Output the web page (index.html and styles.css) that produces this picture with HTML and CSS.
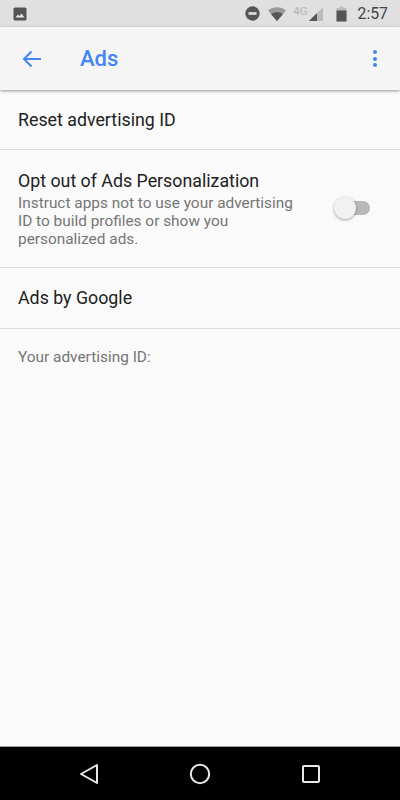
FILE: index.html
```html
<!DOCTYPE html>
<html lang="en">

<head>
    <meta charset="UTF-8">
    <meta name="viewport" content="width=device-width, initial-scale=1.0">
    <title>Ads</title>
    <link rel="stylesheet" href="styles.css">
</head>

<body>
    <!-- Status bar -->
    <div class="status-bar">
        <svg class="photo-icon" width="14" height="14" viewBox="0 0 14 14">
            <rect x="0.5" y="0.5" width="13" height="13" rx="1.5" fill="#555"/>
            <path d="M2.5 10.5 L5 7.5 L6.5 9 L8.5 6.5 L11.5 10.5 Z" fill="#e6e6e6"/>
        </svg>
        <div class="status-right">
            <svg class="dnd-icon" width="15" height="15" viewBox="0 0 15 15">
                <circle cx="7.5" cy="7.5" r="7.2" fill="#555"/>
                <rect x="3.5" y="6.2" width="8" height="2.6" fill="#e0e0e0"/>
            </svg>
            <svg class="wifi-icon" width="18" height="14" viewBox="0 0 18 14">
                <path d="M0 3.5 C5 -0.8 13 -0.8 18 3.5 L9 14 Z" fill="#9a9a9a"/>
                <path d="M3.2 7.2 C6.5 4.6 11.5 4.6 14.8 7.2 L9 14 Z" fill="#555"/>
            </svg>
            <span class="net-label">4G</span>
            <svg class="signal-icon" width="14" height="14" viewBox="0 0 14 14">
                <path d="M14 0 L14 14 L0 14 Z" fill="#bbb"/>
                <path d="M8 6 L8 14 L0 14 Z" fill="#555"/>
            </svg>
            <svg class="battery-icon" width="11" height="16" viewBox="0 0 11 16">
                <path d="M3.5 0.5 H7.5 V2 H10.5 V15.5 H0.5 V2 H3.5 Z" fill="#bdbdbd"/>
                <rect x="0.5" y="4.5" width="10" height="11" fill="#555"/>
            </svg>
            <span class="clock">2:57</span>
        </div>
    </div>

    <!-- Toolbar -->
    <div class="toolbar">
        <svg class="back-arrow" width="20" height="18" viewBox="0 0 20 18">
            <path d="M19 9 H2 M9.5 1.5 L2 9 L9.5 16.5" fill="none" stroke="#4285f4" stroke-width="2"/>
        </svg>
        <h1 class="toolbar-title">Ads</h1>
        <div class="overflow-menu">
            <span></span><span></span><span></span>
        </div>
    </div>

    <!-- Settings list -->
    <div class="content">
        <div class="row row-single">Reset advertising ID</div>
        <div class="row row-toggle">
            <div class="row-text">
                <div class="row-title">Opt out of Ads Personalization</div>
                <div class="row-summary">Instruct apps not to use your advertising ID to build profiles or show you personalized ads.</div>
            </div>
            <div class="switch">
                <div class="switch-thumb"></div>
            </div>
        </div>
        <div class="row row-single row-google">Ads by Google</div>
        <div class="ad-id">Your advertising ID:</div>
    </div>

    <!-- Navigation bar -->
    <div class="nav-bar">
        <svg width="20" height="22" viewBox="0 0 20 22">
            <path d="M18 2 V20 L2 11 Z" fill="none" stroke="#e8e8e8" stroke-width="2" stroke-linejoin="round"/>
        </svg>
        <svg width="22" height="22" viewBox="0 0 22 22">
            <circle cx="11" cy="11" r="9.2" fill="none" stroke="#e8e8e8" stroke-width="2"/>
        </svg>
        <svg width="20" height="20" viewBox="0 0 20 20">
            <rect x="2" y="2" width="16" height="16" rx="1" fill="none" stroke="#e8e8e8" stroke-width="2"/>
        </svg>
    </div>
</body>

</html>
```

FILE: styles.css
```css
* {
    box-sizing: border-box;
}

body {
    font-family: Roboto, Arial, sans-serif;
    margin: 0;
    width: 400px;
    height: 800px;
    display: flex;
    flex-direction: column;
    background-color: #fafafa;
    color: #212121;
    overflow: hidden;
}

.status-bar {
    height: 27px;
    flex-shrink: 0;
    background-color: #e0e0e0;
    display: flex;
    align-items: center;
    justify-content: space-between;
    padding: 0 12px 0 13px;
}

.status-right {
    display: flex;
    align-items: center;
}

.dnd-icon {
    margin-right: 8px;
}

.wifi-icon {
    margin-right: 7px;
}

.net-label {
    font-size: 11.5px;
    color: #b5b5b5;
    margin-right: 1px;
    margin-bottom: 6px;
}

.signal-icon {
    margin-right: 13px;
}

.battery-icon {
    margin-right: 11px;
}

.clock {
    font-size: 15.8px;
    color: #444;
}

.toolbar {
    height: 63px;
    flex-shrink: 0;
    background-color: #f5f5f5;
    display: flex;
    align-items: center;
    padding: 0 23px 0 22px;
    box-shadow: 0 1px 3px rgba(0, 0, 0, 0.4);
    position: relative;
}

.toolbar-title {
    flex: 1;
    margin: 0 0 0 38px;
    font-size: 22px;
    font-weight: 500;
    color: #4285f4;
}

.overflow-menu {
    display: flex;
    flex-direction: column;
    gap: 2.5px;
}

.overflow-menu span {
    width: 4px;
    height: 4px;
    border-radius: 50%;
    background-color: #4285f4;
}

.content {
    flex: 1;
}

.row {
    border-bottom: 1px solid #dcdcdc;
    padding: 0 18px;
}

.row-single {
    height: 60px;
    display: flex;
    align-items: center;
    padding-bottom: 1px;
    font-size: 17.8px;
}

.row-google {
    height: 61px;
}

.row-toggle {
    height: 118px;
    display: flex;
    align-items: center;
    justify-content: space-between;
    padding-right: 30px;
}

.row-text {
    width: 290px;
}

.row-title {
    font-size: 17.8px;
    line-height: 20px;
    margin-top: 1px;
}

.row-summary {
    font-size: 15.4px;
    line-height: 18px;
    color: #757575;
    margin-top: 3px;
}

.switch {
    width: 32px;
    height: 14px;
    border-radius: 7px;
    background-color: #b9b9b9;
    margin-bottom: 2px;
    position: relative;
}

.switch-thumb {
    position: absolute;
    left: -4px;
    top: -4px;
    width: 22px;
    height: 22px;
    border-radius: 50%;
    background-color: #f1f1f1;
    box-shadow: 0 1px 3px rgba(0, 0, 0, 0.35);
}

.ad-id {
    padding: 19px 18px 0;
    font-size: 15.4px;
    color: #757575;
}

.nav-bar {
    height: 54px;
    flex-shrink: 0;
    background-color: #000;
    border-top: 1px solid #9e9e9e;
    display: flex;
    align-items: center;
    justify-content: center;
    gap: 90px;
}
```
